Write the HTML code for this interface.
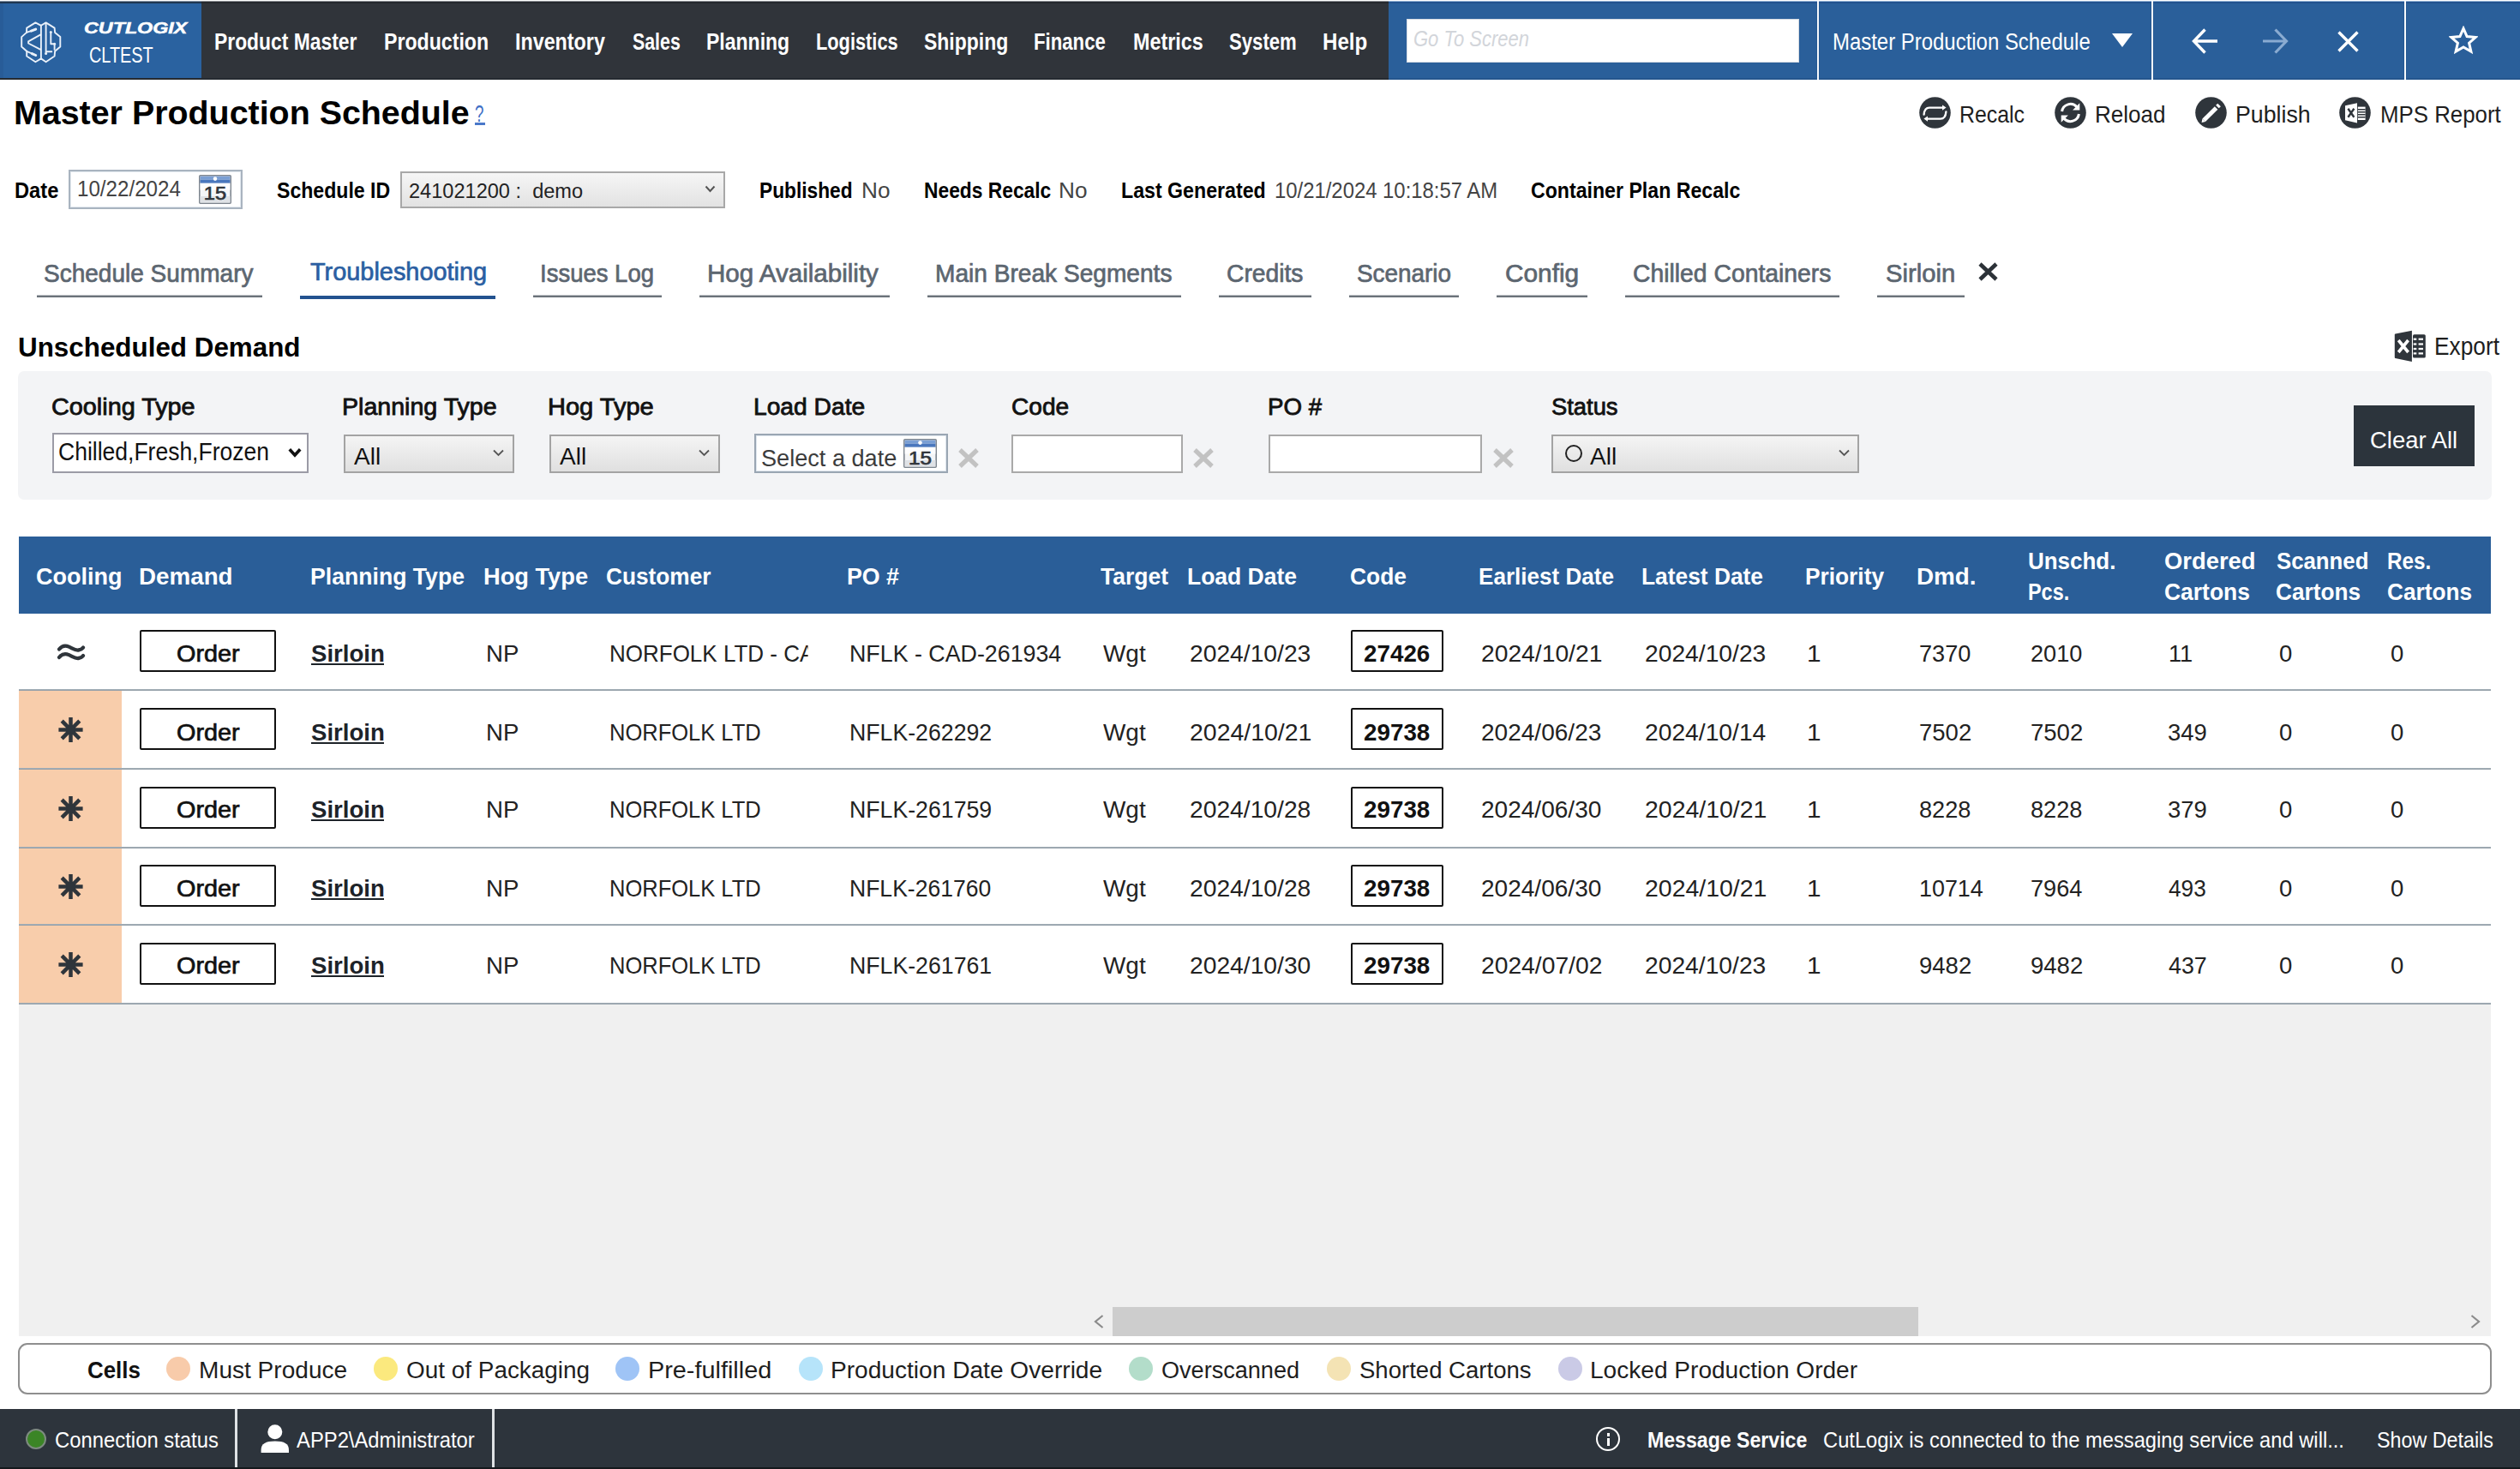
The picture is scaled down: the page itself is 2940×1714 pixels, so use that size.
<!DOCTYPE html>
<html lang="en">
<head>
<meta charset="utf-8">
<title>Master Production Schedule</title>
<style>
html,body{margin:0;padding:0}
body{width:2940px;height:1714px;position:relative;overflow:hidden;background:#fff;
  font-family:"Liberation Sans",sans-serif;color:#000}
nav,header,section,main,aside,footer{position:static;display:block;margin:0;padding:0}
body div,body svg{position:absolute;box-sizing:border-box}
.t{position:absolute;white-space:nowrap;transform-origin:0 0;display:block}

</style>
</head>
<body>
<!-- nav -->
<nav class="nav">
<div style="left:0px;top:0px;width:2940px;height:93px;background:#30343a"></div>
<div style="left:0px;top:91px;width:2940px;height:2px;background:#262b31"></div>
<div style="left:0px;top:2px;width:235px;height:89px;background:#2a62a0"></div>
<div style="left:0px;top:2px;width:4px;height:89px;background:#285c98"></div>
<div style="left:1620px;top:2px;width:1320px;height:91px;background:#2a5f9a"></div>
<div style="left:1620px;top:91px;width:1320px;height:2px;background:#25568e"></div>
<div style="left:0px;top:0px;width:2940px;height:1px;background:#fff"></div>
<div style="left:0px;top:1px;width:235px;height:1px;background:#8795a5"></div>
<div style="left:0px;top:2px;width:235px;height:2px;background:#1f3651"></div>
<div style="left:235px;top:1px;width:1385px;height:1px;background:#8d9094"></div>
<div style="left:235px;top:2px;width:1385px;height:2px;background:#25292e"></div>
<div style="left:1620px;top:1px;width:1320px;height:1px;background:#90b0d4"></div>
<div style="left:1620px;top:2px;width:1320px;height:2px;background:#22528f"></div>
<div style="left:1641px;top:22px;width:458px;height:51px;background:#fff;border:1px solid #d5dbe3"></div>
<div style="left:2120px;top:0px;width:2px;height:93px;background:#f6f9fc"></div>
<div style="left:2119px;top:4px;width:1px;height:89px;background:#255892"></div>
<div style="left:2122px;top:4px;width:1px;height:89px;background:#255892"></div>
<div style="left:2510px;top:0px;width:2px;height:93px;background:#f6f9fc"></div>
<div style="left:2509px;top:4px;width:1px;height:89px;background:#255892"></div>
<div style="left:2512px;top:4px;width:1px;height:89px;background:#255892"></div>
<div style="left:2805px;top:0px;width:2px;height:93px;background:#f6f9fc"></div>
<div style="left:2804px;top:4px;width:1px;height:89px;background:#255892"></div>
<div style="left:2807px;top:4px;width:1px;height:89px;background:#255892"></div>
<svg style="left:15px;top:15px" width="70" height="70" viewBox="0 0 70 70" fill="none" stroke="#e9f0f9" stroke-width="1.900" stroke-linejoin="round" stroke-linecap="round">
<path d="M26.400 11.400L16.200 17.600L16 22.900L10.200 28.100V39.500L16.200 44.800V50.500L26.400 57.200L32.900 53.400L38.600 57.200L48.600 50.500L49.100 44.800L55.300 39.500V28.100L49.100 22.900L48.600 17.600L38.600 11.400L32.900 14.800Z"/>
<path d="M32.900 14.800V53.400"/>
<path d="M38.600 12V47.400M38.600 45.300H45.300"/>
<path d="M44.300 22.600V36.200H48.600V42.900"/>
<path d="M32.400 25.300L18.100 33.400V35.500L32.400 42.900"/>
<path d="M16 22.900L26.700 19.100M16.200 44.800L26.700 49.500"/>
<path d="M21.400 21.200L26.700 19.100M22.400 47.600L26.700 49.500" stroke-width="3"/>
<circle cx="44.300" cy="22.400" r="1.500" fill="#e6eef8" stroke="none"/><circle cx="48.600" cy="36.200" r="1.500" fill="#e6eef8" stroke="none"/><circle cx="38.600" cy="47.400" r="1.500" fill="#e6eef8" stroke="none"/>
</svg>
<svg style="left:2464px;top:39px" width="24" height="16" viewBox="0 0 24 16"><path d="M0 0H24L12 16Z" fill="#fff"/></svg>
<svg style="left:2557px;top:33px" width="30" height="30" viewBox="0 0 30 30" fill="none" stroke="#fff" stroke-width="3.4"><path d="M30 15H3M15.5 1.5L2.5 15L15.5 28.5"/></svg>
<svg style="left:2640px;top:33px" width="30" height="30" viewBox="0 0 30 30" fill="none" stroke="#8aabd1" stroke-width="3.2"><path d="M0 15H27M14.5 1.5L27.5 15L14.5 28.5"/></svg>
<svg style="left:2727px;top:36px" width="25" height="25" viewBox="0 0 25 25" fill="none" stroke="#fff" stroke-width="3.4"><path d="M1.5 1.5L23.5 23.5M23.5 1.5L1.5 23.5"/></svg>
<svg style="left:2857px;top:30px" width="34" height="33" viewBox="0 0 34 33" fill="none" stroke="#fff" stroke-width="3" stroke-linejoin="miter"><path d="M17 3.2L21.1 12.6L31.2 13.5L23.6 20.2L25.9 30.1L17 24.9L8.1 30.1L10.4 20.2L2.8 13.5L12.9 12.6Z"/></svg>
<span class="t" style="left:98.00px;top:23px;font-size:19px;line-height:19px;color:#fff;font-weight:700;font-style:italic;-webkit-text-stroke:0.5px #fff;transform:scaleX(1.2262);">CUTLOGIX</span>
<span class="t" style="left:104.22px;top:52px;font-size:25.5px;line-height:25.5px;color:#fff;transform:scaleX(0.7794);">CLTEST</span>
<span class="t" style="left:250.15px;top:36px;font-size:27px;line-height:27px;color:#fff;font-weight:700;transform:scaleX(0.8468);">Product Master</span>
<span class="t" style="left:448.14px;top:36px;font-size:27px;line-height:27px;color:#fff;font-weight:700;transform:scaleX(0.8572);">Production</span>
<span class="t" style="left:601.14px;top:36px;font-size:27px;line-height:27px;color:#fff;font-weight:700;transform:scaleX(0.8630);">Inventory</span>
<span class="t" style="left:738.00px;top:36px;font-size:27px;line-height:27px;color:#fff;font-weight:700;transform:scaleX(0.7909);">Sales</span>
<span class="t" style="left:824.15px;top:36px;font-size:27px;line-height:27px;color:#fff;font-weight:700;transform:scaleX(0.8520);">Planning</span>
<span class="t" style="left:952.19px;top:36px;font-size:27px;line-height:27px;color:#fff;font-weight:700;transform:scaleX(0.8068);">Logistics</span>
<span class="t" style="left:1078.00px;top:36px;font-size:27px;line-height:27px;color:#fff;font-weight:700;transform:scaleX(0.8510);">Shipping</span>
<span class="t" style="left:1206.18px;top:36px;font-size:27px;line-height:27px;color:#fff;font-weight:700;transform:scaleX(0.8217);">Finance</span>
<span class="t" style="left:1322.14px;top:36px;font-size:27px;line-height:27px;color:#fff;font-weight:700;transform:scaleX(0.8646);">Metrics</span>
<span class="t" style="left:1434.00px;top:36px;font-size:27px;line-height:27px;color:#fff;font-weight:700;transform:scaleX(0.8206);">System</span>
<span class="t" style="left:1543.11px;top:36px;font-size:27px;line-height:27px;color:#fff;font-weight:700;transform:scaleX(0.8945);">Help</span>
<span class="t" style="left:1649.14px;top:33px;font-size:25.5px;line-height:25.5px;color:#d2d5da;font-style:italic;transform:scaleX(0.8633);">Go To Screen</span>
<span class="t" style="left:2138.23px;top:36px;font-size:27px;line-height:27px;color:#fff;transform:scaleX(0.8865);">Master Production Schedule</span>
</nav>
<!-- head -->
<header class="head">
<div style="left:554px;top:143px;width:12px;height:3px;background:#4a78c9"></div>
<svg style="left:2239px;top:113px" width="37" height="37" viewBox="0 0 37 37"><circle cx="18.5" cy="18.5" r="18.3" fill="#2f353b"/><g fill="none" stroke="#fff" stroke-width="2.300" stroke-linecap="round" stroke-linejoin="round"><path d="M5.600 20.600C6 15.500 8 12.600 12 12.600H28.500"/><path d="M31.400 17.400C31 22.500 29 25.600 25 25.600H8.500"/></g><path d="M27 9.400L31.600 12.600L27 15.800ZM10 22.400L5.400 25.600L10 28.800Z" fill="#fff"/></svg>
<svg style="left:2397px;top:113px" width="37" height="37" viewBox="0 0 37 37"><circle cx="18.5" cy="18.5" r="18.3" fill="#2f353b"/><g fill="none" stroke="#fff" stroke-width="3"><path d="M8.600 17A10 10 0 0 1 26 11.800"/><path d="M28.400 20A10 10 0 0 1 11 25.200"/></g><path d="M29.300 7.200V15.400H21.100ZM7.700 29.800V21.600H15.900Z" fill="#fff"/></svg>
<svg style="left:2561px;top:113px" width="37" height="37" viewBox="0 0 37 37"><circle cx="18.5" cy="18.5" r="18.3" fill="#2f353b"/><g stroke="#fff" stroke-width="5" fill="none"><path d="M10.200 27.300L24.600 12.900"/><path d="M25.900 11.600L28.100 9.400"/></g><path d="M7.600 29.900L8.400 25.500L12 29.100Z" fill="#fff"/></svg>
<svg style="left:2729px;top:113px" width="37" height="37" viewBox="0 0 37 37"><circle cx="18.5" cy="18.5" r="18.3" fill="#2f353b"/><path d="M7 10.300L21 7.300V30.400L7 27.200Z" fill="#fff"/><path d="M21.800 11.600H30.600V27H21.800Z" fill="#fff"/><g stroke="#2f353b" stroke-width="1.400"><path d="M21.800 14.800H30.600M21.800 17.800H30.600M21.800 20.800H30.600M21.800 23.800H30.600"/></g><path d="M10.400 13.800L17.400 23.800M17.400 13.800L10.400 23.800" stroke="#2f353b" stroke-width="2.400"/></svg>
<div style="left:80px;top:198px;width:203px;height:46px;background:#fff;border:2px solid #a9b4c0;box-shadow:inset 0 0 0 1px #e3e9ef"></div>
<svg style="left:232px;top:204px" width="38" height="34" viewBox="0 0 39 34" preserveAspectRatio="none">
<rect x="0.800" y="0.800" width="37.400" height="32.400" rx="1" fill="#f4f5f7" stroke="#7d858e" stroke-width="1.600"/>
<rect x="1.600" y="9.600" width="35.800" height="8" fill="#fdfdfe"/>
<rect x="1.600" y="25" width="35.800" height="7.400" fill="#dfe2e6"/>
<rect x="1.600" y="1.600" width="35.800" height="4" fill="#7a9fd4"/>
<rect x="1.600" y="5.600" width="35.800" height="4" fill="#4a77bd"/>
<circle cx="19.500" cy="4.600" r="2.300" fill="#fff"/>
<text x="19.500" y="29.500" text-anchor="middle" font-family="Liberation Sans" font-weight="400" font-size="21.500" fill="#30353b" stroke="#30353b" stroke-width="0.700" textLength="27" lengthAdjust="spacingAndGlyphs">15</text>
</svg>
<div style="left:467px;top:200px;width:379px;height:43px;background:linear-gradient(#f6f6f6,#e2e2e2);border:2px solid #a8a8a8"></div>
<svg style="left:822px;top:216px" width="13" height="9" viewBox="0 0 12 9" fill="none" stroke="#555" stroke-width="2"><path d="M1 1.500L6 7L11 1.500"/></svg>
<span class="t" style="left:15.98px;top:112px;font-size:39px;line-height:39px;color:#000;font-weight:700;transform:scaleX(1.0097);">Master Production Schedule</span>
<span class="t" style="left:554.31px;top:120px;font-size:27px;line-height:27px;color:#3f6fc6;transform:scaleX(0.6929);">?</span>
<span class="t" style="left:2286.26px;top:119px;font-size:28.5px;line-height:28.5px;color:#1e1e1e;transform:scaleX(0.8720);">Recalc</span>
<span class="t" style="left:2444.17px;top:119px;font-size:28.5px;line-height:28.5px;color:#1e1e1e;transform:scaleX(0.9147);">Reload</span>
<span class="t" style="left:2608.13px;top:119px;font-size:28.5px;line-height:28.5px;color:#1e1e1e;transform:scaleX(0.9373);">Publish</span>
<span class="t" style="left:2777.19px;top:119px;font-size:28.5px;line-height:28.5px;color:#1e1e1e;transform:scaleX(0.9067);">MPS Report</span>
<span class="t" style="left:17.09px;top:209px;font-size:26px;line-height:26px;color:#000;font-weight:700;transform:scaleX(0.9108);">Date</span>
<span class="t" style="left:90.03px;top:208px;font-size:25px;line-height:25px;color:#444;transform:scaleX(0.9660);">10/22/2024</span>
<span class="t" style="left:322.50px;top:209px;font-size:26px;line-height:26px;color:#000;font-weight:700;transform:scaleX(0.8883);">Schedule ID</span>
<span class="t" style="left:477.00px;top:212px;font-size:23.5px;line-height:23.5px;color:#222;transform:scaleX(1.0027);white-space:pre;">241021200 :  demo</span>
<span class="t" style="left:886.13px;top:209px;font-size:26px;line-height:26px;color:#000;font-weight:700;transform:scaleX(0.8745);">Published</span>
<span class="t" style="left:1004.99px;top:209px;font-size:26px;line-height:26px;color:#444;transform:scaleX(1.0073);">No</span>
<span class="t" style="left:1078.12px;top:209px;font-size:26px;line-height:26px;color:#000;font-weight:700;transform:scaleX(0.8769);">Needs Recalc</span>
<span class="t" style="left:1234.99px;top:209px;font-size:26px;line-height:26px;color:#444;transform:scaleX(1.0073);">No</span>
<span class="t" style="left:1308.11px;top:209px;font-size:26px;line-height:26px;color:#000;font-weight:700;transform:scaleX(0.8911);">Last Generated</span>
<span class="t" style="left:1487.08px;top:209px;font-size:26px;line-height:26px;color:#444;transform:scaleX(0.9180);">10/21/2024 10:18:57 AM</span>
<span class="t" style="left:1786.11px;top:209px;font-size:26px;line-height:26px;color:#000;font-weight:700;transform:scaleX(0.8899);">Container Plan Recalc</span>
</header>
<!-- tabs -->
<nav class="tabs">
<div style="left:43px;top:344px;width:263px;height:3px;background:linear-gradient(#b9bdc1 0 33%,#6b727a 33%)"></div>
<div style="left:350px;top:345px;width:228px;height:4px;background:#23528f"></div>
<div style="left:622px;top:344px;width:150px;height:3px;background:linear-gradient(#b9bdc1 0 33%,#6b727a 33%)"></div>
<div style="left:816px;top:344px;width:222px;height:3px;background:linear-gradient(#b9bdc1 0 33%,#6b727a 33%)"></div>
<div style="left:1082px;top:344px;width:296px;height:3px;background:linear-gradient(#b9bdc1 0 33%,#6b727a 33%)"></div>
<div style="left:1422px;top:344px;width:108px;height:3px;background:linear-gradient(#b9bdc1 0 33%,#6b727a 33%)"></div>
<div style="left:1574px;top:344px;width:128px;height:3px;background:linear-gradient(#b9bdc1 0 33%,#6b727a 33%)"></div>
<div style="left:1746px;top:344px;width:106px;height:3px;background:linear-gradient(#b9bdc1 0 33%,#6b727a 33%)"></div>
<div style="left:1896px;top:344px;width:250px;height:3px;background:linear-gradient(#b9bdc1 0 33%,#6b727a 33%)"></div>
<div style="left:2190px;top:344px;width:102px;height:3px;background:linear-gradient(#b9bdc1 0 33%,#6b727a 33%)"></div>
<svg style="left:2308px;top:306px" width="23" height="22" viewBox="0 0 23 22" fill="none" stroke="#2c3238" stroke-width="4.6"><path d="M2 2L21 20M21 2L2 20"/></svg>
<span class="t" style="left:51.03px;top:305px;font-size:29px;line-height:29px;color:#5c6670;-webkit-text-stroke:0.7px #5c6670;transform:scaleX(0.9661);">Schedule Summary</span>
<span class="t" style="left:362.00px;top:303px;font-size:29px;line-height:29px;color:#2b5fa2;-webkit-text-stroke:0.7px #2b5fa2;transform:scaleX(0.9963);">Troubleshooting</span>
<span class="t" style="left:630.10px;top:305px;font-size:29px;line-height:29px;color:#5c6670;-webkit-text-stroke:0.7px #5c6670;transform:scaleX(0.9480);">Issues Log</span>
<span class="t" style="left:824.96px;top:305px;font-size:29px;line-height:29px;color:#5c6670;-webkit-text-stroke:0.7px #5c6670;transform:scaleX(1.0192);">Hog Availability</span>
<span class="t" style="left:1091.06px;top:305px;font-size:29px;line-height:29px;color:#5c6670;-webkit-text-stroke:0.7px #5c6670;transform:scaleX(0.9689);">Main Break Segments</span>
<span class="t" style="left:1431.03px;top:305px;font-size:29px;line-height:29px;color:#5c6670;-webkit-text-stroke:0.7px #5c6670;transform:scaleX(0.9739);">Credits</span>
<span class="t" style="left:1583.04px;top:305px;font-size:29px;line-height:29px;color:#5c6670;-webkit-text-stroke:0.7px #5c6670;transform:scaleX(0.9615);">Scenario</span>
<span class="t" style="left:1755.97px;top:305px;font-size:29px;line-height:29px;color:#5c6670;-webkit-text-stroke:0.7px #5c6670;transform:scaleX(1.0282);">Config</span>
<span class="t" style="left:1905.02px;top:305px;font-size:29px;line-height:29px;color:#5c6670;-webkit-text-stroke:0.7px #5c6670;transform:scaleX(0.9768);">Chilled Containers</span>
<span class="t" style="left:2199.99px;top:305px;font-size:29px;line-height:29px;color:#5c6670;-webkit-text-stroke:0.7px #5c6670;transform:scaleX(1.0069);">Sirloin</span>
</nav>
<!-- filter -->
<section class="filter">
<svg style="left:2793px;top:385px" width="38" height="38" viewBox="0 0 38 38">
<path d="M0.800 5.600Q0.800 4.800 1.600 4.600L20.900 0.700V37L1.600 33Q0.800 32.800 0.800 32Z" fill="#2f353b"/>
<rect x="22" y="5.200" width="14.800" height="27.400" rx="1.600" fill="#2f353b"/>
<g fill="#fff"><rect x="22.700" y="9.600" width="3.600" height="2.200"/><rect x="28.600" y="9.600" width="5.400" height="2.200"/>
<rect x="22.700" y="15.400" width="3.600" height="2.200"/><rect x="28.600" y="15.400" width="5.400" height="2.200"/>
<rect x="22.700" y="20.900" width="3.600" height="2.200"/><rect x="28.600" y="20.900" width="5.400" height="2.200"/>
<rect x="22.700" y="26.300" width="3.600" height="2.200"/><rect x="28.600" y="26.300" width="5.400" height="2.200"/></g>
<path d="M5.200 12L16.600 26M16.600 12L5.200 26" stroke="#fff" stroke-width="3.600"/></svg>
<div style="left:21px;top:433px;width:2886px;height:150px;background:#f3f4f6;border-radius:7px"></div>
<div style="left:61px;top:505px;width:299px;height:47px;background:#fff;border:2px solid #9b9ba6"></div>
<svg style="left:336px;top:522px" width="16" height="12" viewBox="0 0 16 12" fill="none" stroke="#111" stroke-width="3.600" stroke-linejoin="miter"><path d="M1.800 2.200L8 9L14.200 2.200"/></svg>
<div style="left:401px;top:507px;width:199px;height:45px;background:linear-gradient(#f4f4f4,#e0e0e0);border:2px solid #a3a3a3"></div>
<svg style="left:575px;top:524px" width="13" height="9" viewBox="0 0 13 9" fill="none" stroke="#555" stroke-width="1.800"><path d="M1 1.500L6.500 7L12 1.500"/></svg>
<div style="left:641px;top:507px;width:199px;height:45px;background:linear-gradient(#f4f4f4,#e0e0e0);border:2px solid #a3a3a3"></div>
<svg style="left:815px;top:524px" width="13" height="9" viewBox="0 0 13 9" fill="none" stroke="#555" stroke-width="1.800"><path d="M1 1.500L6.500 7L12 1.500"/></svg>
<div style="left:880px;top:506px;width:226px;height:46px;background:#fff;border:2px solid #9aa6b3;box-shadow:inset 0 0 0 1px #dfe6ee"></div>
<svg style="left:1054px;top:512px" width="39" height="34" viewBox="0 0 39 34" preserveAspectRatio="none">
<rect x="0.800" y="0.800" width="37.400" height="32.400" rx="1" fill="#f4f5f7" stroke="#7d858e" stroke-width="1.600"/>
<rect x="1.600" y="9.600" width="35.800" height="8" fill="#fdfdfe"/>
<rect x="1.600" y="25" width="35.800" height="7.400" fill="#dfe2e6"/>
<rect x="1.600" y="1.600" width="35.800" height="4" fill="#7a9fd4"/>
<rect x="1.600" y="5.600" width="35.800" height="4" fill="#4a77bd"/>
<circle cx="19.500" cy="4.600" r="2.300" fill="#fff"/>
<text x="19.500" y="29.500" text-anchor="middle" font-family="Liberation Sans" font-weight="400" font-size="21.500" fill="#30353b" stroke="#30353b" stroke-width="0.700" textLength="27" lengthAdjust="spacingAndGlyphs">15</text>
</svg>
<svg style="left:1118px;top:523px" width="24" height="23" viewBox="0 0 24 23" fill="none" stroke="#c2c2c2" stroke-width="5.200"><path d="M2 2L22 21M22 2L2 21"/></svg>
<div style="left:1180px;top:507px;width:200px;height:45px;background:#fff;border:2px solid #a9a9a9"></div>
<svg style="left:1392px;top:523px" width="24" height="23" viewBox="0 0 24 23" fill="none" stroke="#c2c2c2" stroke-width="5.200"><path d="M2 2L22 21M22 2L2 21"/></svg>
<div style="left:1480px;top:507px;width:249px;height:45px;background:#fff;border:2px solid #a9a9a9"></div>
<svg style="left:1742px;top:523px" width="24" height="23" viewBox="0 0 24 23" fill="none" stroke="#c2c2c2" stroke-width="5.200"><path d="M2 2L22 21M22 2L2 21"/></svg>
<div style="left:1810px;top:507px;width:359px;height:45px;background:linear-gradient(#f4f4f4,#e0e0e0);border:2px solid #a3a3a3"></div>
<div style="left:1826px;top:519px;width:20px;height:20px;border:2.500px solid #222;border-radius:50%"></div>
<svg style="left:2145px;top:524px" width="13" height="9" viewBox="0 0 13 9" fill="none" stroke="#555" stroke-width="1.800"><path d="M1 1.500L6.500 7L12 1.500"/></svg>
<div style="left:2746px;top:473px;width:141px;height:71px;background:#2c343c"></div>
<span class="t" style="left:21.02px;top:389px;font-size:32px;line-height:32px;color:#000;font-weight:700;transform:scaleX(0.9805);">Unscheduled Demand</span>
<span class="t" style="left:2839.79px;top:390px;font-size:29px;line-height:29px;color:#1e1e1e;transform:scaleX(0.9063);">Export</span>
<span class="t" style="left:59.93px;top:462px;font-size:27px;line-height:27px;color:#111;-webkit-text-stroke:0.8px #111;transform:scaleX(1.0670);">Cooling Type</span>
<span class="t" style="left:398.88px;top:462px;font-size:27px;line-height:27px;color:#111;-webkit-text-stroke:0.8px #111;transform:scaleX(1.0588);">Planning Type</span>
<span class="t" style="left:638.85px;top:462px;font-size:27px;line-height:27px;color:#111;-webkit-text-stroke:0.8px #111;transform:scaleX(1.0751);">Hog Type</span>
<span class="t" style="left:878.91px;top:462px;font-size:27px;line-height:27px;color:#111;-webkit-text-stroke:0.8px #111;transform:scaleX(1.0446);">Load Date</span>
<span class="t" style="left:1179.96px;top:462px;font-size:27px;line-height:27px;color:#111;-webkit-text-stroke:0.8px #111;transform:scaleX(1.0395);">Code</span>
<span class="t" style="left:1478.95px;top:462px;font-size:27px;line-height:27px;color:#111;-webkit-text-stroke:0.8px #111;transform:scaleX(1.0250);">PO #</span>
<span class="t" style="left:1809.99px;top:462px;font-size:27px;line-height:27px;color:#111;-webkit-text-stroke:0.8px #111;transform:scaleX(1.0127);">Status</span>
<span class="t" style="left:68.09px;top:513px;font-size:29px;line-height:29px;color:#111;transform:scaleX(0.9138);">Chilled,Fresh,Frozen</span>
<span class="t" style="left:413.00px;top:519px;font-size:27.5px;line-height:27.5px;color:#111;transform:scaleX(1.0186);">All</span>
<span class="t" style="left:653.00px;top:519px;font-size:27.5px;line-height:27.5px;color:#111;transform:scaleX(1.0186);">All</span>
<span class="t" style="left:888.01px;top:521px;font-size:27.5px;line-height:27.5px;color:#3c3c3c;transform:scaleX(0.9860);">Select a date</span>
<span class="t" style="left:1855.00px;top:519px;font-size:27.5px;line-height:27.5px;color:#111;transform:scaleX(1.0186);">All</span>
<span class="t" style="left:2764.52px;top:500px;font-size:28px;line-height:28px;color:#fff;transform:scaleX(0.9799);">Clear All</span>
</section>
<!-- grid -->
<main class="grid">
<div style="left:22px;top:626px;width:2884px;height:90px;background:#2a5e98"></div>
<div style="left:22px;top:804px;width:2884px;height:2px;background:linear-gradient(#a9b4bc,#8f9ba4)"></div>
<svg style="left:65px;top:749px" width="36" height="24" viewBox="0 0 36 24" fill="none" stroke="#2f353b" stroke-width="4.200" stroke-linecap="round"><path d="M4 8.500C7 4.600 11 3.600 15.500 5.600S23 10.400 27 9.400S31 7.600 32 6.600"/><path d="M4 18C7 14.100 11 13.100 15.500 15.100S23 19.900 27 18.900S31 17.100 32 16.100"/></svg>
<div style="left:163px;top:735px;width:159px;height:49px;background:#fff;border:2px solid #111;border-radius:2px"></div>
<div style="left:363px;top:774px;width:85px;height:2px;background:#1d2329"></div>
<div style="left:1576px;top:735px;width:108px;height:49px;background:#fff;border:2px solid #111;border-radius:2px"></div>
<div style="left:22px;top:896px;width:2884px;height:2px;background:linear-gradient(#a9b4bc,#8f9ba4)"></div>
<div style="left:22px;top:806px;width:120px;height:90px;background:#f8cdab"></div>
<svg style="left:68px;top:837px" width="29" height="29" viewBox="0 0 29 29" fill="none" stroke="#2f353b" stroke-width="4.500" stroke-linecap="butt"><path d="M14.500 0V29M0.400 14.500H28.600M4.200 4.200L24.800 24.800M24.800 4.200L4.200 24.800"/><circle cx="14.500" cy="14.500" r="4.600" fill="#2f353b" stroke="none"/></svg>
<div style="left:163px;top:826px;width:159px;height:49px;background:#fff;border:2px solid #111;border-radius:2px"></div>
<div style="left:363px;top:866px;width:85px;height:2px;background:#1d2329"></div>
<div style="left:1576px;top:826px;width:108px;height:49px;background:#fff;border:2px solid #111;border-radius:2px"></div>
<div style="left:22px;top:988px;width:2884px;height:2px;background:linear-gradient(#a9b4bc,#8f9ba4)"></div>
<div style="left:22px;top:898px;width:120px;height:90px;background:#f8cdab"></div>
<svg style="left:68px;top:929px" width="29" height="29" viewBox="0 0 29 29" fill="none" stroke="#2f353b" stroke-width="4.500" stroke-linecap="butt"><path d="M14.500 0V29M0.400 14.500H28.600M4.200 4.200L24.800 24.800M24.800 4.200L4.200 24.800"/><circle cx="14.500" cy="14.500" r="4.600" fill="#2f353b" stroke="none"/></svg>
<div style="left:163px;top:918px;width:159px;height:49px;background:#fff;border:2px solid #111;border-radius:2px"></div>
<div style="left:363px;top:956px;width:85px;height:2px;background:#1d2329"></div>
<div style="left:1576px;top:918px;width:108px;height:49px;background:#fff;border:2px solid #111;border-radius:2px"></div>
<div style="left:22px;top:1078px;width:2884px;height:2px;background:linear-gradient(#a9b4bc,#8f9ba4)"></div>
<div style="left:22px;top:990px;width:120px;height:88px;background:#f8cdab"></div>
<svg style="left:68px;top:1020px" width="29" height="29" viewBox="0 0 29 29" fill="none" stroke="#2f353b" stroke-width="4.500" stroke-linecap="butt"><path d="M14.500 0V29M0.400 14.500H28.600M4.200 4.200L24.800 24.800M24.800 4.200L4.200 24.800"/><circle cx="14.500" cy="14.500" r="4.600" fill="#2f353b" stroke="none"/></svg>
<div style="left:163px;top:1009px;width:159px;height:49px;background:#fff;border:2px solid #111;border-radius:2px"></div>
<div style="left:363px;top:1048px;width:85px;height:2px;background:#1d2329"></div>
<div style="left:1576px;top:1009px;width:108px;height:49px;background:#fff;border:2px solid #111;border-radius:2px"></div>
<div style="left:22px;top:1170px;width:2884px;height:2px;background:linear-gradient(#a9b4bc,#8f9ba4)"></div>
<div style="left:22px;top:1080px;width:120px;height:90px;background:#f8cdab"></div>
<svg style="left:68px;top:1111px" width="29" height="29" viewBox="0 0 29 29" fill="none" stroke="#2f353b" stroke-width="4.500" stroke-linecap="butt"><path d="M14.500 0V29M0.400 14.500H28.600M4.200 4.200L24.800 24.800M24.800 4.200L4.200 24.800"/><circle cx="14.500" cy="14.500" r="4.600" fill="#2f353b" stroke="none"/></svg>
<div style="left:163px;top:1100px;width:159px;height:49px;background:#fff;border:2px solid #111;border-radius:2px"></div>
<div style="left:363px;top:1138px;width:85px;height:2px;background:#1d2329"></div>
<div style="left:1576px;top:1100px;width:108px;height:49px;background:#fff;border:2px solid #111;border-radius:2px"></div>
<div style="left:22px;top:1172px;width:2884px;height:387px;background:#f0f0f0"></div>
<div style="left:1298px;top:1525px;width:940px;height:34px;background:#cdcdcd"></div>
<svg style="left:1276px;top:1534px" width="12" height="16" viewBox="0 0 12 16" fill="none" stroke="#8b8b8b" stroke-width="2.200"><path d="M10.500 1L2 8L10.500 15"/></svg>
<svg style="left:2882px;top:1534px" width="12" height="16" viewBox="0 0 12 16" fill="none" stroke="#8b8b8b" stroke-width="2.200"><path d="M1.500 1L10 8L1.500 15"/></svg>
<span class="t" style="left:42.00px;top:660px;font-size:27px;line-height:27px;color:#fff;font-weight:700;">Cooling</span>
<span class="t" style="left:161.97px;top:660px;font-size:27px;line-height:27px;color:#fff;font-weight:700;transform:scaleX(1.0285);">Demand</span>
<span class="t" style="left:362.01px;top:660px;font-size:27px;line-height:27px;color:#fff;font-weight:700;transform:scaleX(0.9862);">Planning Type</span>
<span class="t" style="left:563.99px;top:660px;font-size:27px;line-height:27px;color:#fff;font-weight:700;transform:scaleX(1.0085);">Hog Type</span>
<span class="t" style="left:707.03px;top:660px;font-size:27px;line-height:27px;color:#fff;font-weight:700;transform:scaleX(0.9720);">Customer</span>
<span class="t" style="left:988.01px;top:660px;font-size:27px;line-height:27px;color:#fff;font-weight:700;transform:scaleX(0.9915);">PO #</span>
<span class="t" style="left:1284.00px;top:660px;font-size:27px;line-height:27px;color:#fff;font-weight:700;transform:scaleX(0.9811);">Target</span>
<span class="t" style="left:1385.02px;top:660px;font-size:27px;line-height:27px;color:#fff;font-weight:700;transform:scaleX(0.9807);">Load Date</span>
<span class="t" style="left:1575.02px;top:660px;font-size:27px;line-height:27px;color:#fff;font-weight:700;transform:scaleX(0.9777);">Code</span>
<span class="t" style="left:1725.03px;top:660px;font-size:27px;line-height:27px;color:#fff;font-weight:700;transform:scaleX(0.9658);">Earliest Date</span>
<span class="t" style="left:1915.02px;top:660px;font-size:27px;line-height:27px;color:#fff;font-weight:700;transform:scaleX(0.9756);">Latest Date</span>
<span class="t" style="left:2106.03px;top:660px;font-size:27px;line-height:27px;color:#fff;font-weight:700;transform:scaleX(0.9732);">Priority</span>
<span class="t" style="left:2235.97px;top:660px;font-size:27px;line-height:27px;color:#fff;font-weight:700;transform:scaleX(1.0308);">Dmd.</span>
<span class="t" style="left:2366.04px;top:642px;font-size:27px;line-height:27px;color:#fff;font-weight:700;transform:scaleX(0.9615);">Unschd.</span>
<span class="t" style="left:2366.13px;top:678px;font-size:27px;line-height:27px;color:#fff;font-weight:700;transform:scaleX(0.8673);">Pcs.</span>
<span class="t" style="left:2524.99px;top:642px;font-size:27px;line-height:27px;color:#fff;font-weight:700;transform:scaleX(1.0142);">Ordered</span>
<span class="t" style="left:2525.02px;top:678px;font-size:27px;line-height:27px;color:#fff;font-weight:700;transform:scaleX(0.9800);">Cartons</span>
<span class="t" style="left:2656.00px;top:642px;font-size:27px;line-height:27px;color:#fff;font-weight:700;transform:scaleX(0.9546);">Scanned</span>
<span class="t" style="left:2655.03px;top:678px;font-size:27px;line-height:27px;color:#fff;font-weight:700;transform:scaleX(0.9700);">Cartons</span>
<span class="t" style="left:2785.10px;top:642px;font-size:27px;line-height:27px;color:#fff;font-weight:700;transform:scaleX(0.8986);">Res.</span>
<span class="t" style="left:2785.03px;top:678px;font-size:27px;line-height:27px;color:#fff;font-weight:700;transform:scaleX(0.9700);">Cartons</span>
<span class="t" style="left:205.95px;top:749px;font-size:27.5px;line-height:27.5px;color:#111;-webkit-text-stroke:0.7px #111;transform:scaleX(1.0487);">Order</span>
<span class="t" style="left:363.00px;top:749px;font-size:27.5px;line-height:27.5px;color:#1d2329;font-weight:700;transform:scaleX(1.0028);">Sirloin</span>
<span class="t" style="left:566.99px;top:749px;font-size:27.5px;line-height:27.5px;color:#222;transform:scaleX(1.0040);">NP</span>
<span class="t" style="left:711.11px;top:749px;font-size:27.5px;line-height:27.5px;color:#222;transform:scaleX(0.9453);clip-path:inset(-10px 3.2% -10px 0);">NORFOLK LTD - CA</span>
<span class="t" style="left:991.05px;top:749px;font-size:27.5px;line-height:27.5px;color:#222;transform:scaleX(0.9745);">NFLK - CAD-261934</span>
<span class="t" style="left:1287.00px;top:749px;font-size:27.5px;line-height:27.5px;color:#222;transform:scaleX(1.0152);">Wgt</span>
<span class="t" style="left:1387.97px;top:749px;font-size:27.5px;line-height:27.5px;color:#222;transform:scaleX(1.0268);">2024/10/23</span>
<span class="t" style="left:1591.00px;top:749px;font-size:27.5px;line-height:27.5px;color:#111;font-weight:700;transform:scaleX(1.0108);">27426</span>
<span class="t" style="left:1727.97px;top:749px;font-size:27.5px;line-height:27.5px;color:#222;transform:scaleX(1.0270);">2024/10/21</span>
<span class="t" style="left:1918.97px;top:749px;font-size:27.5px;line-height:27.5px;color:#222;transform:scaleX(1.0268);">2024/10/23</span>
<span class="t" style="left:2107.83px;top:749px;font-size:27.5px;line-height:27.5px;color:#222;transform:scaleX(1.0833);">1</span>
<span class="t" style="left:2239.01px;top:749px;font-size:27.5px;line-height:27.5px;color:#222;transform:scaleX(0.9853);">7370</span>
<span class="t" style="left:2369.01px;top:749px;font-size:27.5px;line-height:27.5px;color:#222;transform:scaleX(0.9853);">2010</span>
<span class="t" style="left:2530.02px;top:749px;font-size:27.5px;line-height:27.5px;color:#222;transform:scaleX(0.9900);">11</span>
<span class="t" style="left:2659.00px;top:749px;font-size:27.5px;line-height:27.5px;color:#222;">0</span>
<span class="t" style="left:2789.00px;top:749px;font-size:27.5px;line-height:27.5px;color:#222;">0</span>
<span class="t" style="left:205.95px;top:841px;font-size:27.5px;line-height:27.5px;color:#111;-webkit-text-stroke:0.7px #111;transform:scaleX(1.0487);">Order</span>
<span class="t" style="left:363.00px;top:841px;font-size:27.5px;line-height:27.5px;color:#1d2329;font-weight:700;transform:scaleX(1.0028);">Sirloin</span>
<span class="t" style="left:566.99px;top:841px;font-size:27.5px;line-height:27.5px;color:#222;transform:scaleX(1.0040);">NP</span>
<span class="t" style="left:711.15px;top:841px;font-size:27.5px;line-height:27.5px;color:#222;transform:scaleX(0.9274);">NORFOLK LTD</span>
<span class="t" style="left:991.06px;top:841px;font-size:27.5px;line-height:27.5px;color:#222;transform:scaleX(0.9707);">NFLK-262292</span>
<span class="t" style="left:1287.00px;top:841px;font-size:27.5px;line-height:27.5px;color:#222;transform:scaleX(1.0152);">Wgt</span>
<span class="t" style="left:1387.97px;top:841px;font-size:27.5px;line-height:27.5px;color:#222;transform:scaleX(1.0344);">2024/10/21</span>
<span class="t" style="left:1591.00px;top:841px;font-size:27.5px;line-height:27.5px;color:#111;font-weight:700;transform:scaleX(1.0108);">29738</span>
<span class="t" style="left:1727.98px;top:841px;font-size:27.5px;line-height:27.5px;color:#222;transform:scaleX(1.0195);">2024/06/23</span>
<span class="t" style="left:1918.97px;top:841px;font-size:27.5px;line-height:27.5px;color:#222;transform:scaleX(1.0268);">2024/10/14</span>
<span class="t" style="left:2107.83px;top:841px;font-size:27.5px;line-height:27.5px;color:#222;transform:scaleX(1.0833);">1</span>
<span class="t" style="left:2239.00px;top:841px;font-size:27.5px;line-height:27.5px;color:#222;">7502</span>
<span class="t" style="left:2369.00px;top:841px;font-size:27.5px;line-height:27.5px;color:#222;">7502</span>
<span class="t" style="left:2529.00px;top:841px;font-size:27.5px;line-height:27.5px;color:#222;transform:scaleX(0.9980);">349</span>
<span class="t" style="left:2659.00px;top:841px;font-size:27.5px;line-height:27.5px;color:#222;">0</span>
<span class="t" style="left:2789.00px;top:841px;font-size:27.5px;line-height:27.5px;color:#222;">0</span>
<span class="t" style="left:205.95px;top:931px;font-size:27.5px;line-height:27.5px;color:#111;-webkit-text-stroke:0.7px #111;transform:scaleX(1.0487);">Order</span>
<span class="t" style="left:363.00px;top:931px;font-size:27.5px;line-height:27.5px;color:#1d2329;font-weight:700;transform:scaleX(1.0028);">Sirloin</span>
<span class="t" style="left:566.99px;top:931px;font-size:27.5px;line-height:27.5px;color:#222;transform:scaleX(1.0040);">NP</span>
<span class="t" style="left:711.15px;top:931px;font-size:27.5px;line-height:27.5px;color:#222;transform:scaleX(0.9274);">NORFOLK LTD</span>
<span class="t" style="left:991.06px;top:931px;font-size:27.5px;line-height:27.5px;color:#222;transform:scaleX(0.9707);">NFLK-261759</span>
<span class="t" style="left:1287.00px;top:931px;font-size:27.5px;line-height:27.5px;color:#222;transform:scaleX(1.0152);">Wgt</span>
<span class="t" style="left:1387.97px;top:931px;font-size:27.5px;line-height:27.5px;color:#222;transform:scaleX(1.0268);">2024/10/28</span>
<span class="t" style="left:1591.00px;top:931px;font-size:27.5px;line-height:27.5px;color:#111;font-weight:700;transform:scaleX(1.0108);">29738</span>
<span class="t" style="left:1727.98px;top:931px;font-size:27.5px;line-height:27.5px;color:#222;transform:scaleX(1.0195);">2024/06/30</span>
<span class="t" style="left:1918.97px;top:931px;font-size:27.5px;line-height:27.5px;color:#222;transform:scaleX(1.0344);">2024/10/21</span>
<span class="t" style="left:2107.83px;top:931px;font-size:27.5px;line-height:27.5px;color:#222;transform:scaleX(1.0833);">1</span>
<span class="t" style="left:2239.01px;top:931px;font-size:27.5px;line-height:27.5px;color:#222;transform:scaleX(0.9853);">8228</span>
<span class="t" style="left:2369.01px;top:931px;font-size:27.5px;line-height:27.5px;color:#222;transform:scaleX(0.9853);">8228</span>
<span class="t" style="left:2529.00px;top:931px;font-size:27.5px;line-height:27.5px;color:#222;transform:scaleX(0.9980);">379</span>
<span class="t" style="left:2659.00px;top:931px;font-size:27.5px;line-height:27.5px;color:#222;">0</span>
<span class="t" style="left:2789.00px;top:931px;font-size:27.5px;line-height:27.5px;color:#222;">0</span>
<span class="t" style="left:205.95px;top:1023px;font-size:27.5px;line-height:27.5px;color:#111;-webkit-text-stroke:0.7px #111;transform:scaleX(1.0487);">Order</span>
<span class="t" style="left:363.00px;top:1023px;font-size:27.5px;line-height:27.5px;color:#1d2329;font-weight:700;transform:scaleX(1.0028);">Sirloin</span>
<span class="t" style="left:566.99px;top:1023px;font-size:27.5px;line-height:27.5px;color:#222;transform:scaleX(1.0040);">NP</span>
<span class="t" style="left:711.15px;top:1023px;font-size:27.5px;line-height:27.5px;color:#222;transform:scaleX(0.9274);">NORFOLK LTD</span>
<span class="t" style="left:991.07px;top:1023px;font-size:27.5px;line-height:27.5px;color:#222;transform:scaleX(0.9649);">NFLK-261760</span>
<span class="t" style="left:1287.00px;top:1023px;font-size:27.5px;line-height:27.5px;color:#222;transform:scaleX(1.0152);">Wgt</span>
<span class="t" style="left:1387.97px;top:1023px;font-size:27.5px;line-height:27.5px;color:#222;transform:scaleX(1.0268);">2024/10/28</span>
<span class="t" style="left:1591.00px;top:1023px;font-size:27.5px;line-height:27.5px;color:#111;font-weight:700;transform:scaleX(1.0108);">29738</span>
<span class="t" style="left:1727.98px;top:1023px;font-size:27.5px;line-height:27.5px;color:#222;transform:scaleX(1.0195);">2024/06/30</span>
<span class="t" style="left:1918.97px;top:1023px;font-size:27.5px;line-height:27.5px;color:#222;transform:scaleX(1.0344);">2024/10/21</span>
<span class="t" style="left:2107.83px;top:1023px;font-size:27.5px;line-height:27.5px;color:#222;transform:scaleX(1.0833);">1</span>
<span class="t" style="left:2239.05px;top:1023px;font-size:27.5px;line-height:27.5px;color:#222;transform:scaleX(0.9774);">10714</span>
<span class="t" style="left:2369.01px;top:1023px;font-size:27.5px;line-height:27.5px;color:#222;transform:scaleX(0.9853);">7964</span>
<span class="t" style="left:2530.00px;top:1023px;font-size:27.5px;line-height:27.5px;color:#222;transform:scaleX(0.9542);">493</span>
<span class="t" style="left:2659.00px;top:1023px;font-size:27.5px;line-height:27.5px;color:#222;">0</span>
<span class="t" style="left:2789.00px;top:1023px;font-size:27.5px;line-height:27.5px;color:#222;">0</span>
<span class="t" style="left:205.95px;top:1113px;font-size:27.5px;line-height:27.5px;color:#111;-webkit-text-stroke:0.7px #111;transform:scaleX(1.0487);">Order</span>
<span class="t" style="left:363.00px;top:1113px;font-size:27.5px;line-height:27.5px;color:#1d2329;font-weight:700;transform:scaleX(1.0028);">Sirloin</span>
<span class="t" style="left:566.99px;top:1113px;font-size:27.5px;line-height:27.5px;color:#222;transform:scaleX(1.0040);">NP</span>
<span class="t" style="left:711.15px;top:1113px;font-size:27.5px;line-height:27.5px;color:#222;transform:scaleX(0.9274);">NORFOLK LTD</span>
<span class="t" style="left:991.06px;top:1113px;font-size:27.5px;line-height:27.5px;color:#222;transform:scaleX(0.9707);">NFLK-261761</span>
<span class="t" style="left:1287.00px;top:1113px;font-size:27.5px;line-height:27.5px;color:#222;transform:scaleX(1.0152);">Wgt</span>
<span class="t" style="left:1387.97px;top:1113px;font-size:27.5px;line-height:27.5px;color:#222;transform:scaleX(1.0268);">2024/10/30</span>
<span class="t" style="left:1591.00px;top:1113px;font-size:27.5px;line-height:27.5px;color:#111;font-weight:700;transform:scaleX(1.0108);">29738</span>
<span class="t" style="left:1727.97px;top:1113px;font-size:27.5px;line-height:27.5px;color:#222;transform:scaleX(1.0270);">2024/07/02</span>
<span class="t" style="left:1918.97px;top:1113px;font-size:27.5px;line-height:27.5px;color:#222;transform:scaleX(1.0268);">2024/10/23</span>
<span class="t" style="left:2107.83px;top:1113px;font-size:27.5px;line-height:27.5px;color:#222;transform:scaleX(1.0833);">1</span>
<span class="t" style="left:2239.00px;top:1113px;font-size:27.5px;line-height:27.5px;color:#222;">9482</span>
<span class="t" style="left:2369.00px;top:1113px;font-size:27.5px;line-height:27.5px;color:#222;">9482</span>
<span class="t" style="left:2530.00px;top:1113px;font-size:27.5px;line-height:27.5px;color:#222;transform:scaleX(0.9756);">437</span>
<span class="t" style="left:2659.00px;top:1113px;font-size:27.5px;line-height:27.5px;color:#222;">0</span>
<span class="t" style="left:2789.00px;top:1113px;font-size:27.5px;line-height:27.5px;color:#222;">0</span>
</main>
<!-- legend -->
<aside class="legend">
<div style="left:21px;top:1567px;width:2886px;height:60px;background:#fff;border:2px solid #8e8e8e;border-radius:11px"></div>
<div style="left:194px;top:1583px;width:28px;height:28px;background:#f8cbaa;border-radius:50%"></div>
<div style="left:436px;top:1583px;width:28px;height:28px;background:#fbe97e;border-radius:50%"></div>
<div style="left:718px;top:1583px;width:28px;height:28px;background:#9fc4f6;border-radius:50%"></div>
<div style="left:932px;top:1583px;width:28px;height:28px;background:#b6e4fa;border-radius:50%"></div>
<div style="left:1317px;top:1583px;width:28px;height:28px;background:#b3ddca;border-radius:50%"></div>
<div style="left:1548px;top:1583px;width:28px;height:28px;background:#f4e3b4;border-radius:50%"></div>
<div style="left:1818px;top:1583px;width:28px;height:28px;background:#cacae6;border-radius:50%"></div>
<span class="t" style="left:102.04px;top:1586px;font-size:27px;line-height:27px;color:#111;font-weight:700;transform:scaleX(0.9597);">Cells</span>
<span class="t" style="left:231.92px;top:1586px;font-size:27px;line-height:27px;color:#1e1e1e;transform:scaleX(1.0394);">Must Produce</span>
<span class="t" style="left:473.97px;top:1586px;font-size:27px;line-height:27px;color:#1e1e1e;transform:scaleX(1.0336);">Out of Packaging</span>
<span class="t" style="left:755.86px;top:1586px;font-size:27px;line-height:27px;color:#1e1e1e;transform:scaleX(1.0679);">Pre-fulfilled</span>
<span class="t" style="left:968.92px;top:1586px;font-size:27px;line-height:27px;color:#1e1e1e;transform:scaleX(1.0410);">Production Date Override</span>
<span class="t" style="left:1355.00px;top:1586px;font-size:27px;line-height:27px;color:#1e1e1e;transform:scaleX(1.0027);">Overscanned</span>
<span class="t" style="left:1585.98px;top:1586px;font-size:27px;line-height:27px;color:#1e1e1e;transform:scaleX(1.0200);">Shorted Cartons</span>
<span class="t" style="left:1854.92px;top:1586px;font-size:27px;line-height:27px;color:#1e1e1e;transform:scaleX(1.0397);">Locked Production Order</span>
</aside>
<!-- status -->
<footer class="status">
<div style="left:0px;top:1644px;width:2940px;height:70px;background:#2d343c"></div>
<div style="left:0px;top:1712px;width:2940px;height:2px;background:#14181c"></div>
<div style="left:30px;top:1667px;width:24px;height:24px;background:#3b8526;border:2px solid #7d8a80;border-radius:50%"></div>
<div style="left:274px;top:1644px;width:3px;height:68px;background:#dfe2e5"></div>
<svg style="left:304px;top:1662px" width="34" height="33" viewBox="0 0 34 33" fill="#fff"><circle cx="16.800" cy="8.800" r="8.500"/><path d="M0.600 33V30C0.600 22.500 6 19.600 16.800 19.600S33 22.500 33 30V33Z"/></svg>
<div style="left:574px;top:1644px;width:3px;height:68px;background:#dfe2e5"></div>
<div style="left:1862px;top:1665px;width:28px;height:28px;border:2.500px solid #fff;border-radius:50%"></div>
<div style="left:1874.5px;top:1672px;width:3.0px;height:3.5px;background:#fff"></div>
<div style="left:1874.5px;top:1677.5px;width:3.0px;height:9.5px;background:#fff"></div>
<span class="t" style="left:64.08px;top:1667px;font-size:26px;line-height:26px;color:#fff;transform:scaleX(0.9173);">Connection status</span>
<span class="t" style="left:346.00px;top:1667px;font-size:26px;line-height:26px;color:#fff;transform:scaleX(0.9155);">APP2\Administrator</span>
<span class="t" style="left:1922.11px;top:1667px;font-size:26px;line-height:26px;color:#fff;font-weight:700;transform:scaleX(0.8889);">Message Service</span>
<span class="t" style="left:2127.09px;top:1667px;font-size:26px;line-height:26px;color:#fff;transform:scaleX(0.9125);">CutLogix is connected to the messaging service and will...</span>
<span class="t" style="left:2773.10px;top:1667px;font-size:26px;line-height:26px;color:#fff;transform:scaleX(0.8956);">Show Details</span>
</footer>
</body>
</html>
